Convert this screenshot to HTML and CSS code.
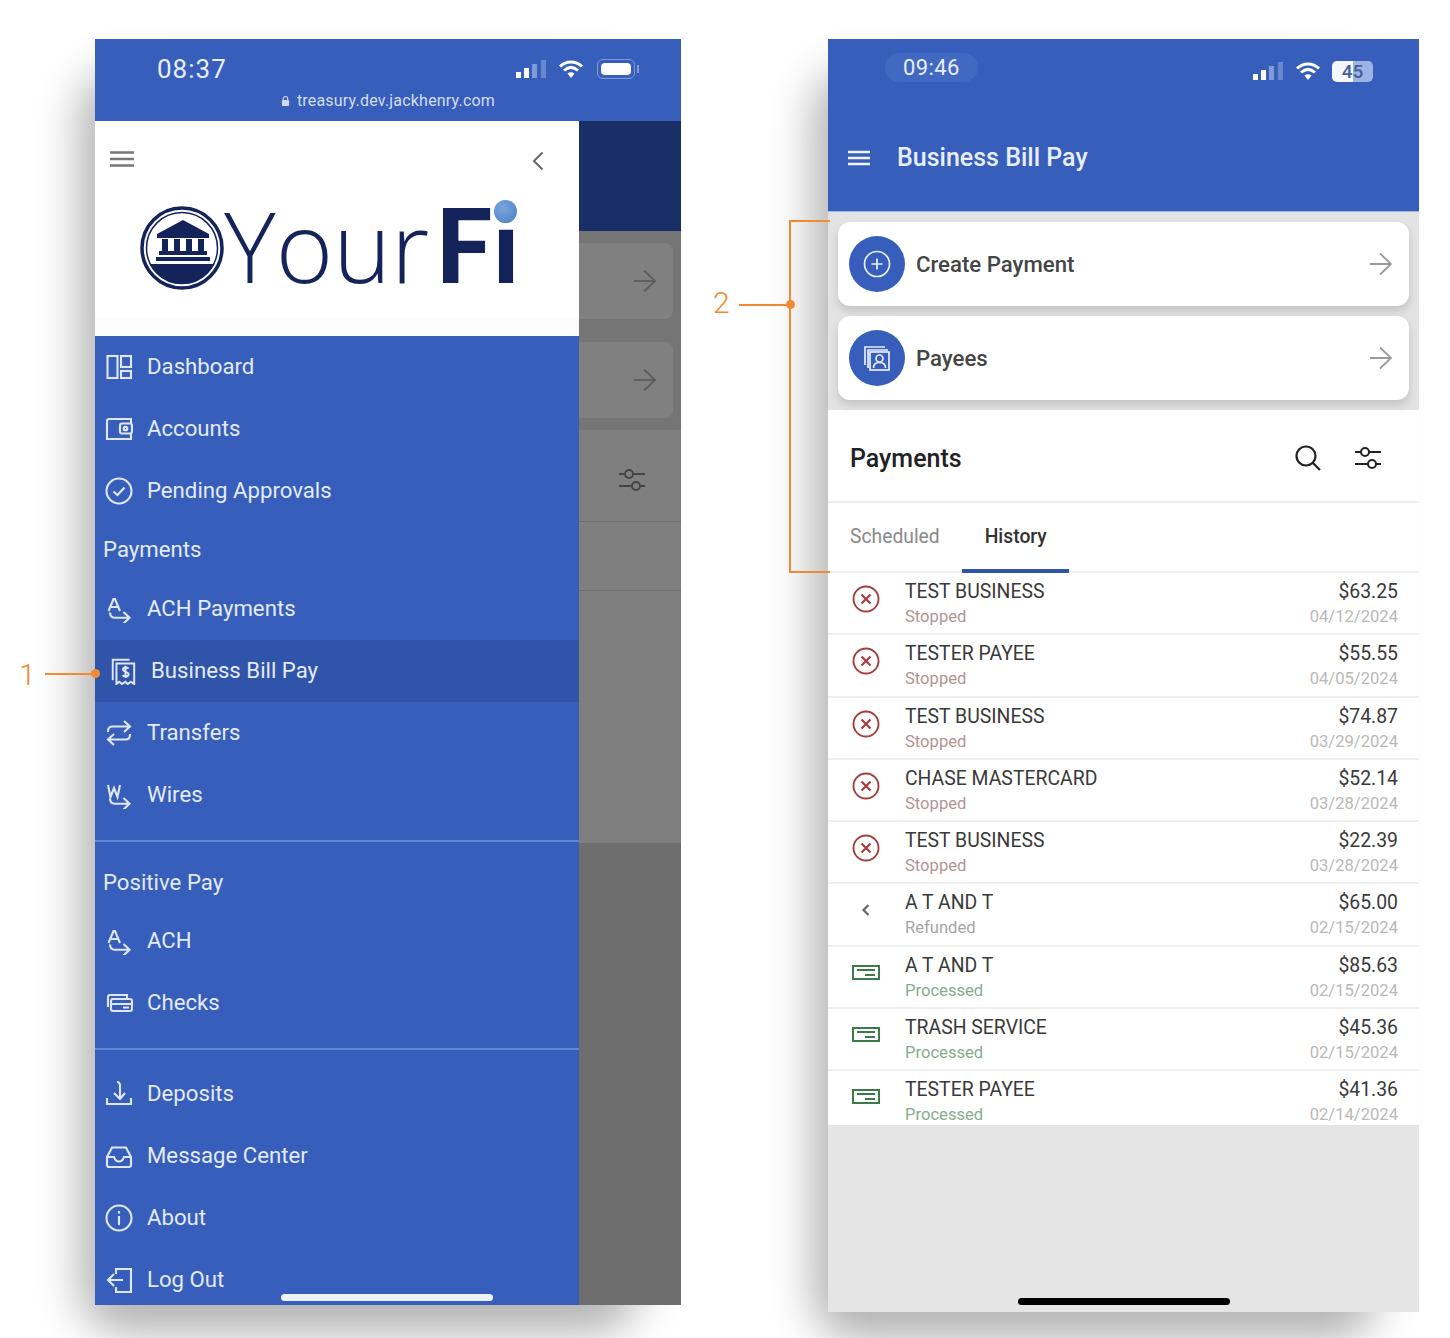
FILE: index.html
```html
<!DOCTYPE html>
<html lang="en">
<head>
    <meta charset="UTF-8">
    <meta name="viewport" content="width=device-width, initial-scale=1.0">
    <title>Business Bill Pay navigation</title>
    <link rel="stylesheet" href="styles.css">
</head>
<body>
    <svg class="sprite" xmlns="http://www.w3.org/2000/svg">
        <symbol id="i-ach" viewBox="0 0 28 28"><path d="M3.500 16 8.500 4h1.500l5 12M5.500 12h7.500"/><path d="M5 17.500c0 3.500 2 5.200 5 5.200h14.500M18.500 17l6 5.700-6 5.800"/></symbol>
        <symbol id="i-wire" viewBox="0 0 28 28"><path d="M3 4l2.500 12L9 7l3.500 9L15 4"/><path d="M5 17.500c0 3.500 2 5.200 5 5.200h14.500M18.500 17l6 5.700-6 5.800"/></symbol>
        <symbol id="i-arrow" viewBox="0 0 24 24"><path d="M1 12h21M11 1.500 22 12 11 22.500"/></symbol>
        <symbol id="i-sliders" viewBox="0 0 28 24"><path d="M1 6h6M15 6h12M1 18h13M22 18h5"/><circle cx="11" cy="6" r="4"/><circle cx="18" cy="18" r="4"/></symbol>
        <symbol id="i-stop" viewBox="0 0 28 28"><circle cx="14" cy="14" r="12.500"/><path d="M9.500 9.500l9 9M18.500 9.500l-9 9" stroke-width="2.200"/></symbol>
        <symbol id="i-check" viewBox="0 0 28 16"><rect x="1" y="1" width="26" height="13"/><path d="M5 5h18M13 10h10"/></symbol>
    </svg>

    <div class="page">
        <!-- left phone, menu open -->
        <div class="phone phone-menu">
            <div class="status status-menu">
                <div class="status-row">
                    <span class="clock">08:37</span>
                    <span class="status-icons">
                        <svg class="signal" viewBox="0 0 31 20"><rect x="0" y="13" width="5" height="6" fill="#fff"/><rect x="8" y="9" width="5" height="10" fill="#fff"/><rect x="16" y="5" width="5" height="14" fill="#7f9bd8"/><rect x="25" y="1" width="5" height="18" fill="#6787cf"/></svg>
                        <svg class="wifi" viewBox="0 0 26 20"><path d="M2 7.500c6.500-6 15.500-6 22 0M6 11.500c4.500-4 9.500-4 14 0" fill="none" stroke="#fff" stroke-width="3"/><path d="M9.500 14.500c2.300-1.800 4.700-1.800 7 0L13 19z" fill="#fff"/></svg>
                        <span class="battery"><i class="battery-fill"></i></span>
                    </span>
                </div>
                <div class="url">
                    <svg class="lock" viewBox="0 0 10 12"><path d="M2.500 5V3.500a2.500 2.500 0 0 1 5 0V5" fill="none" stroke="#cfd9f2" stroke-width="1.200"/><rect x="1" y="5" width="8" height="6.500" rx="1" fill="#cfd9f2"/></svg>
                    treasury.dev.jackhenry.com
                </div>
            </div>
            <div class="menu-body">
                <div class="drawer">
                    <div class="brand">
                        <div class="brand-top">
                            <svg class="burger" viewBox="0 0 24 16"><path d="M0 1.500h24M0 8h24M0 14.500h24"/></svg>
                            <svg class="back" viewBox="0 0 12 20"><path d="M10.500 1.500 2 10l8.500 8.500"/></svg>
                        </div>
                        <div class="logo">
                            <svg class="logo-mark" viewBox="0 0 84 84">
                                <circle cx="42" cy="42" r="40" fill="none" stroke="#14245a" stroke-width="3.500"/>
                                <circle cx="42" cy="42" r="35.500" fill="none" stroke="#14245a" stroke-width="1.500"/>
                                <path d="M9.800 58H74.200A36 36 0 0 1 9.800 58z" fill="#14245a"/>
                                <path d="M43 14 17 28v4h52v-4zM22 33h6v12h-6zM34 33h6v12h-6zM46 33h6v12h-6zM58 33h6v12h-6zM19 45h48v4H19zM16 51h54v4H16z" fill="#14245a"/>
                            </svg>
                            <span class="logo-word">Your<b>Fi</b><i class="logo-dot"></i></span>
                        </div>
                    </div>
                    <nav class="menu">
                        <a class="menu-item">
                            <svg class="menu-icon" viewBox="0 0 28 28"><rect x="2.500" y="3" width="10" height="22"/><rect x="16" y="3" width="10" height="11"/><rect x="16" y="18" width="10" height="7"/></svg>
                            Dashboard
                        </a>
                        <a class="menu-item">
                            <svg class="menu-icon" viewBox="0 0 28 28"><path d="M26 8V4H4a2 2 0 0 0-2 2v18h24v-5"/><rect x="15" y="8.500" width="12" height="10" rx="2"/><circle cx="20.500" cy="13.500" r="1.800"/></svg>
                            Accounts
                        </a>
                        <a class="menu-item">
                            <svg class="menu-icon" viewBox="0 0 28 28"><circle cx="14" cy="14" r="12.500"/><path d="M8.500 14.500l4 3.500 7-7.500"/></svg>
                            Pending Approvals
                        </a>
                        <div class="menu-label">Payments</div>
                        <a class="menu-item">
                            <svg class="menu-icon"><use href="#i-ach"/></svg>
                            ACH Payments
                        </a>
                        <a class="menu-item menu-item-active">
                            <svg class="menu-icon" viewBox="0 0 28 30"><path d="M3 23V3h18M3 5v20"/><path d="M7 7h19v22l-3.500-2.500L19 29l-2.500-2.500L13 29l-3-2.500L7 29z"/><path d="M20 12.500c-1-1.500-6-2-6 1s6 2 6 5-5 3-6.500 1M16.700 9.500v13"/></svg>
                            Business Bill Pay
                        </a>
                        <a class="menu-item">
                            <svg class="menu-icon" viewBox="0 0 28 28"><path d="M3 13v-1c0-3 2-4.500 4.500-4.500H25M19 2l6 5.500-6 5.500M25 15v1c0 3-2 4.500-4.500 4.500H3M9 15l-6 5.500L9 26"/></svg>
                            Transfers
                        </a>
                        <a class="menu-item">
                            <svg class="menu-icon"><use href="#i-wire"/></svg>
                            Wires
                        </a>
                        <div class="menu-divider"></div>
                        <div class="menu-label menu-label-pos">Positive Pay</div>
                        <a class="menu-item">
                            <svg class="menu-icon"><use href="#i-ach"/></svg>
                            ACH
                        </a>
                        <a class="menu-item">
                            <svg class="menu-icon" viewBox="0 0 28 28"><path d="M3 18V8a2 2 0 0 1 2-2h17v3"/><rect x="6" y="10" width="21" height="12" rx="2"/><path d="M6 15h21M18 18.500h6"/></svg>
                            Checks
                        </a>
                        <div class="menu-divider menu-divider-low"></div>
                        <a class="menu-item">
                            <svg class="menu-icon" viewBox="0 0 28 28"><path d="M2 18v6h24v-6"/><path d="M12 2c3 0 3 2 3 4v12M9 13l6 6 5-6"/></svg>
                            Deposits
                        </a>
                        <a class="menu-item">
                            <svg class="menu-icon" viewBox="0 0 28 28"><path d="M2 15l5-9.500h14l5 9.500v8a2 2 0 0 1-2 2H4a2 2 0 0 1-2-2z"/><path d="M2 15h7c1 3 3 4.500 5 4.500s4-1.500 5-4.500h7"/></svg>
                            Message Center
                        </a>
                        <a class="menu-item">
                            <svg class="menu-icon" viewBox="0 0 28 28"><circle cx="14" cy="14" r="12.500"/><path d="M14 12v9M14 7v2.500"/></svg>
                            About
                        </a>
                        <a class="menu-item">
                            <svg class="menu-icon" viewBox="0 0 28 28"><path d="M11 8V3h15v23H11v-5"/><path d="M18 14H3M9 8l-6 6 6 6"/></svg>
                            Log Out
                        </a>
                    </nav>
                </div>
                <div class="backdrop">
                    <div class="dim-header"></div>
                    <div class="dim-actions">
                        <div class="dim-card"><svg class="dim-arrow"><use href="#i-arrow"/></svg></div>
                        <div class="dim-card"><svg class="dim-arrow"><use href="#i-arrow"/></svg></div>
                    </div>
                    <div class="dim-row dim-row-tall"><svg class="dim-sliders"><use href="#i-sliders"/></svg></div>
                    <div class="dim-row"></div>
                    <div class="dim-fill"></div>
                    <div class="dim-end"></div>
                </div>
            </div>
            <div class="home-bar home-bar-white"></div>
        </div>

        <!-- right phone, bill pay screen -->
        <div class="phone phone-bills">
            <div class="status status-bills">
                <div class="status-row">
                    <span class="clock-pill">09:46</span>
                    <span class="status-icons status-icons-low">
                        <svg class="signal" viewBox="0 0 31 20"><rect x="0" y="13" width="5" height="6" fill="#fff"/><rect x="8" y="9" width="5" height="10" fill="#fff"/><rect x="16" y="5" width="5" height="14" fill="#7f9bd8"/><rect x="25" y="1" width="5" height="18" fill="#6787cf"/></svg>
                        <svg class="wifi" viewBox="0 0 26 20"><path d="M2 7.500c6.500-6 15.500-6 22 0M6 11.500c4.500-4 9.500-4 14 0" fill="none" stroke="#fff" stroke-width="3"/><path d="M9.500 14.500c2.300-1.800 4.700-1.800 7 0L13 19z" fill="#fff"/></svg>
                        <span class="battery-num">45</span>
                    </span>
                </div>
                <div class="title-row">
                    <svg class="burger burger-light" viewBox="0 0 24 16"><path d="M0 1.500h24M0 8h24M0 14.500h24"/></svg>
                    <span class="title">Business Bill Pay</span>
                </div>
            </div>

            <div class="actions">
                <div class="action-card">
                    <span class="action-circle">
                        <svg class="action-icon" viewBox="0 0 28 28"><circle cx="14" cy="14" r="12.500"/><path d="M14 8.500v11M8.500 14h11"/></svg>
                    </span>
                    <span class="action-text">Create Payment</span>
                    <svg class="action-arrow"><use href="#i-arrow"/></svg>
                </div>
                <div class="action-card">
                    <span class="action-circle">
                        <svg class="action-icon" viewBox="0 0 28 28"><path d="M2 21V3h20M5 24V6h20"/><rect x="7" y="8" width="19" height="18"/><circle cx="16.500" cy="14.500" r="3.500"/><path d="M10.500 24c0-4 3-5.500 6-5.500s6 1.500 6 5.500"/></svg>
                    </span>
                    <span class="action-text">Payees</span>
                    <svg class="action-arrow"><use href="#i-arrow"/></svg>
                </div>
            </div>

            <div class="list-head">
                <span class="list-title">Payments</span>
                <svg class="tool-search" viewBox="0 0 26 26"><circle cx="11" cy="11" r="9.500"/><path d="M18 18l7 7"/></svg>
                <svg class="tool-sliders"><use href="#i-sliders"/></svg>
            </div>

            <div class="tabs">
                <span class="tab">Scheduled</span>
                <span class="tab tab-active">History</span>
            </div>

            <div class="rows">
                <div class="row">
                    <svg class="row-icon row-icon-stop"><use href="#i-stop"/></svg>
                    <div class="row-main"><div class="row-name">TEST BUSINESS</div><div class="row-state state-stop">Stopped</div></div>
                    <div class="row-side"><div class="row-amount">$63.25</div><div class="row-date">04/12/2024</div></div>
                </div>
                <div class="row">
                    <svg class="row-icon row-icon-stop"><use href="#i-stop"/></svg>
                    <div class="row-main"><div class="row-name">TESTER PAYEE</div><div class="row-state state-stop">Stopped</div></div>
                    <div class="row-side"><div class="row-amount">$55.55</div><div class="row-date">04/05/2024</div></div>
                </div>
                <div class="row">
                    <svg class="row-icon row-icon-stop"><use href="#i-stop"/></svg>
                    <div class="row-main"><div class="row-name">TEST BUSINESS</div><div class="row-state state-stop">Stopped</div></div>
                    <div class="row-side"><div class="row-amount">$74.87</div><div class="row-date">03/29/2024</div></div>
                </div>
                <div class="row">
                    <svg class="row-icon row-icon-stop"><use href="#i-stop"/></svg>
                    <div class="row-main"><div class="row-name">CHASE MASTERCARD</div><div class="row-state state-stop">Stopped</div></div>
                    <div class="row-side"><div class="row-amount">$52.14</div><div class="row-date">03/28/2024</div></div>
                </div>
                <div class="row">
                    <svg class="row-icon row-icon-stop"><use href="#i-stop"/></svg>
                    <div class="row-main"><div class="row-name">TEST BUSINESS</div><div class="row-state state-stop">Stopped</div></div>
                    <div class="row-side"><div class="row-amount">$22.39</div><div class="row-date">03/28/2024</div></div>
                </div>
                <div class="row">
                    <svg class="row-icon row-icon-refund" viewBox="0 0 28 28"><path d="M16.500 9 11.500 14l5 5"/></svg>
                    <div class="row-main"><div class="row-name">A T AND T</div><div class="row-state state-refund">Refunded</div></div>
                    <div class="row-side"><div class="row-amount">$65.00</div><div class="row-date">02/15/2024</div></div>
                </div>
                <div class="row">
                    <svg class="row-icon row-icon-check"><use href="#i-check"/></svg>
                    <div class="row-main"><div class="row-name">A T AND T</div><div class="row-state state-done">Processed</div></div>
                    <div class="row-side"><div class="row-amount">$85.63</div><div class="row-date">02/15/2024</div></div>
                </div>
                <div class="row">
                    <svg class="row-icon row-icon-check"><use href="#i-check"/></svg>
                    <div class="row-main"><div class="row-name">TRASH SERVICE</div><div class="row-state state-done">Processed</div></div>
                    <div class="row-side"><div class="row-amount">$45.36</div><div class="row-date">02/15/2024</div></div>
                </div>
                <div class="row">
                    <svg class="row-icon row-icon-check"><use href="#i-check"/></svg>
                    <div class="row-main"><div class="row-name">TESTER PAYEE</div><div class="row-state state-done">Processed</div></div>
                    <div class="row-side"><div class="row-amount">$41.36</div><div class="row-date">02/14/2024</div></div>
                </div>
            </div>
            <div class="empty"></div>
            <div class="home-bar home-bar-black"></div>
        </div>

        <!-- orange callouts -->
        <span class="callout-num callout-num-1">1</span>
        <span class="callout-line callout-line-1"></span>
        <span class="callout-dot callout-dot-1"></span>
        <span class="callout-num callout-num-2">2</span>
        <span class="callout-line callout-line-2"></span>
        <span class="callout-bracket"></span>
        <span class="callout-dot callout-dot-2"></span>
    </div>
</body>
</html>
```

FILE: styles.css
```css
* {
    box-sizing: border-box;
}

body {
    margin: 0;
    background-color: #fff;
    font-family: Roboto, 'Noto Sans', sans-serif;
}

.sprite {
    display: none;
}

.page {
    position: relative;
    display: flex;
    align-items: flex-start;
    gap: 147px;
    width: 1450px;
    height: 1338px;
    padding: 39px 0 0 95px;
    overflow: hidden;
}

.phone {
    position: relative;
    display: flex;
    flex-direction: column;
    overflow: hidden;
    flex: none;
}

.page::before,
.page::after {
    content: '';
    position: absolute;
    background: transparent;
    border-radius: 30px;
    box-shadow: -6px 14px 44px 14px rgba(0, 0, 0, 0.3);
}

.page::before {
    left: 100px;
    top: 70px;
    width: 530px;
    height: 1235px;
}

.page::after {
    left: 833px;
    top: 70px;
    width: 535px;
    height: 1242px;
}

.phone-menu {
    width: 586px;
    height: 1266px;
    background-color: #365eba;
    z-index: 1;
}

.phone-bills {
    width: 591px;
    height: 1273px;
    background-color: #fff;
    z-index: 1;
}

/* status bars */
.status {
    background-color: #365eba;
    color: #e8eefa;
    flex: none;
}

.status-menu {
    height: 82px;
    padding: 14px 42px 0 62px;
}

.status-bills {
    height: 173px;
    padding: 12px 43px 0 57px;
    border-bottom: 1px solid #9db7e8;
}

.status-row {
    display: flex;
    justify-content: space-between;
    align-items: center;
    height: 32px;
}

.clock {
    font-size: 26px;
    letter-spacing: 1px;
}

.clock-pill {
    padding: 2px 18px;
    border-radius: 16px;
    background-color: #4169c2;
    font-size: 22px;
    letter-spacing: 0.4px;
}

.status-icons {
    display: flex;
    align-items: center;
    gap: 11px;
}

.status-icons-low {
    margin-top: 8px;
}

.signal {
    width: 31px;
    height: 20px;
}

.wifi {
    width: 26px;
    height: 20px;
}

.battery {
    position: relative;
    display: block;
    width: 38px;
    height: 20px;
    padding: 3px;
    margin: 0 4px 0 2px;
    border: 1px solid #7f9bd8;
    border-radius: 6px;
}

.battery::after {
    content: '';
    position: absolute;
    right: -5px;
    top: 5px;
    width: 2px;
    height: 8px;
    background-color: #7f9bd8;
}

.battery-fill {
    display: block;
    width: 100%;
    height: 100%;
    border-radius: 4px;
    background-color: #fff;
}

.battery-num {
    width: 41px;
    height: 21px;
    margin-right: 3px;
    border-radius: 5px;
    background: linear-gradient(90deg, #f4f6fb 50%, #9db3e3 50%);
    color: #41609f;
    font-size: 19px;
    font-weight: 500;
    line-height: 21px;
    text-align: center;
}

.url {
    display: flex;
    justify-content: center;
    align-items: center;
    gap: 7px;
    margin-top: 6px;
    padding-right: 20px;
    font-size: 16px;
    letter-spacing: 0.2px;
    color: #d3ddf3;
}

.lock {
    width: 9px;
    height: 12px;
}

/* left phone */
.menu-body {
    display: flex;
    flex: 1;
    min-height: 0;
}

.drawer {
    width: 484px;
    flex: none;
    background-color: #365eba;
}

.brand {
    height: 215px;
    padding: 30px 35px 0 15px;
    background: linear-gradient(#fff 91%, #fcfcfc 91%);
}

.brand-top {
    display: flex;
    justify-content: space-between;
    align-items: flex-start;
}

.burger {
    width: 24px;
    height: 16px;
    fill: none;
    stroke: #777;
    stroke-width: 2.600;
}

.burger-light {
    width: 22px;
    stroke: #f1f4fb;
    stroke-width: 2.600;
}

.back {
    width: 12px;
    height: 20px;
    fill: none;
    stroke: #666;
    stroke-width: 2;
}

.logo {
    display: flex;
    align-items: flex-start;
    margin: 35px 0 0 30px;
}

.logo-mark {
    width: 84px;
    height: 84px;
    flex: none;
}

.logo-word {
    position: relative;
    display: block;
    margin-top: -4px;
    font-family: 'Open Sans', Lato, sans-serif;
    font-size: 98px;
    font-weight: 300;
    line-height: 84px;
    color: #14245a;
}

.logo-word b {
    margin-left: 6px;
    font-family: Lato, 'Open Sans', sans-serif;
    font-size: 102px;
    font-weight: 900;
}

.logo-dot {
    position: absolute;
    right: 2px;
    top: -2px;
    width: 23px;
    height: 23px;
    border-radius: 50%;
    background: radial-gradient(circle at 40% 35%, #7aa6dc, #4a80c4);
    box-shadow: 0 5px 0 1px #fff;
}

.menu {
    display: flex;
    flex-direction: column;
}

.menu-item {
    display: flex;
    align-items: center;
    gap: 14px;
    height: 62px;
    flex: none;
    padding: 0 0 2px 10px;
    font-size: 22.200px;
    color: #e3eaf8;
}

.menu-item-active {
    padding-left: 14px;
    background-color: #2f54a9;
}

.menu-icon {
    width: 28px;
    height: 28px;
    flex: none;
    margin-top: 2px;
    fill: none;
    stroke: #dfe7f7;
    stroke-width: 2.100;
}

.menu-label {
    display: flex;
    align-items: center;
    height: 56px;
    padding: 0 0 2px 8px;
    font-size: 22.200px;
    color: #e3eaf8;
}

.menu-label-pos {
    height: 68px;
    padding: 12px 0 0 8px;
}

.menu-divider {
    height: 2px;
    margin-top: 14px;
    background-color: #5f86d8;
}

.menu-divider-low {
    margin-bottom: 13px;
}

.home-bar {
    position: absolute;
    height: 7px;
    width: 212px;
    border-radius: 4px;
}

.home-bar-white {
    left: 186px;
    bottom: 4px;
    background-color: #eef2fb;
}

.home-bar-black {
    left: 190px;
    bottom: 7px;
    background-color: #000;
}

/* dimmed screen behind the drawer */
.backdrop {
    flex: 1;
    display: flex;
    flex-direction: column;
    background-color: #7f7f7f;
}

.dim-header {
    height: 110px;
    flex: none;
    background-color: #1a2f66;
}

.dim-actions {
    display: flex;
    flex-direction: column;
    gap: 23px;
    height: 199px;
    flex: none;
    padding: 12px 8px 0 0;
    background-color: #757575;
}

.dim-card {
    display: flex;
    justify-content: flex-end;
    align-items: center;
    height: 76px;
    padding-right: 16px;
    border-radius: 0 8px 8px 0;
    background-color: #808080;
}

.dim-arrow {
    width: 24px;
    height: 24px;
    fill: none;
    stroke: #5f5f5f;
    stroke-width: 2;
}

.dim-row {
    height: 69px;
    flex: none;
    border-bottom: 1px solid #6f6f6f;
}

.dim-row-tall {
    display: flex;
    justify-content: flex-end;
    align-items: center;
    height: 92px;
    padding: 8px 35px 0 0;
}

.dim-sliders {
    width: 28px;
    height: 24px;
    fill: none;
    stroke: #444;
    stroke-width: 1.900;
}

.dim-fill {
    height: 252px;
    flex: none;
}

.dim-end {
    flex: 1;
    background-color: #6e6e6e;
}

/* right phone */
.title-row {
    display: flex;
    align-items: center;
    gap: 27px;
    margin-top: 60px;
    padding-left: 20px;
    margin-left: -57px;
}

.title {
    font-size: 25px;
    font-weight: 500;
    color: #e8eefa;
}

.actions {
    display: flex;
    flex-direction: column;
    gap: 10px;
    height: 198px;
    flex: none;
    padding: 10px;
    background-color: #e3e3e3;
}

.action-card {
    display: flex;
    align-items: center;
    height: 84px;
    padding: 0 16px 0 11px;
    border-radius: 12px;
    background-color: #fff;
    box-shadow: 0 5px 9px rgba(0, 0, 0, 0.14);
}

.action-circle {
    display: flex;
    justify-content: center;
    align-items: center;
    width: 56px;
    height: 56px;
    flex: none;
    border-radius: 50%;
    background-color: #365eba;
}

.action-icon {
    width: 28px;
    height: 28px;
    fill: none;
    stroke: #e8eefa;
    stroke-width: 1.700;
}

.action-text {
    flex: 1;
    margin-left: 11px;
    font-size: 22.200px;
    font-weight: 500;
    color: #454545;
}

.action-arrow {
    width: 24px;
    height: 24px;
    fill: none;
    stroke: #9a9a9a;
    stroke-width: 1.800;
}

.list-head {
    display: flex;
    align-items: center;
    height: 93px;
    flex: none;
    padding: 5px 37px 0 22px;
    border-bottom: 2px solid #eee;
}

.list-title {
    flex: 1;
    font-size: 25px;
    font-weight: 500;
    color: #222;
}

.tool-search {
    width: 26px;
    height: 26px;
    margin-right: 33px;
    fill: none;
    stroke: #222;
    stroke-width: 2.200;
}

.tool-sliders {
    width: 28px;
    height: 24px;
    fill: none;
    stroke: #222;
    stroke-width: 2;
}

.tabs {
    display: flex;
    height: 70px;
    flex: none;
    padding-left: 22px;
    border-bottom: 2px solid #eee;
}

.tab {
    padding-top: 22px;
    font-size: 19.300px;
    color: #8a8a8a;
}

.tab-active {
    height: 70px;
    margin-left: 22px;
    padding: 22px 22px 0 23px;
    border-bottom: 4px solid #2f55a8;
    font-weight: 500;
    color: #333;
}

.rows {
    height: 552px;
    flex: none;
    overflow: hidden;
}

.row {
    display: flex;
    align-items: center;
    height: 62.250px;
    padding: 0 21px 0 24px;
    border-bottom: 2px solid #efefef;
}

.row-icon {
    width: 28px;
    height: 28px;
    flex: none;
    margin-top: -8px;
    fill: none;
    stroke-width: 1.900;
}

.row-icon-stop {
    stroke: #a43f40;
}

.row-icon-refund {
    stroke: #666;
    stroke-width: 2.200;
}

.row-icon-check {
    height: 16px;
    stroke: #3d7a4a;
    stroke-width: 2;
}

.row-main {
    flex: 1;
    margin-left: 25px;
}

.row-name {
    font-size: 19.400px;
    line-height: 28px;
    color: #3a3a3a;
}

.row-state {
    font-size: 16.600px;
    line-height: 22px;
}

.state-stop {
    color: #b59393;
}

.state-refund {
    color: #a5a5a5;
}

.state-done {
    color: #84ad8c;
}

.row-side {
    text-align: right;
}

.row-amount {
    font-size: 19.400px;
    line-height: 28px;
    color: #3a3a3a;
}

.row-date {
    font-size: 16.600px;
    line-height: 22px;
    color: #b9b9b9;
}

.empty {
    flex: 1;
    background-color: #e5e5e5;
}

/* orange callouts */
.callout-num {
    position: absolute;
    z-index: 2;
    font-size: 30px;
    font-weight: 300;
    line-height: 36px;
    color: #f08a35;
}

.callout-num-1 {
    left: 19px;
    top: 657px;
}

.callout-num-2 {
    left: 713px;
    top: 285px;
}

.callout-line {
    position: absolute;
    z-index: 2;
    height: 2px;
    background-color: #f08a35;
}

.callout-line-1 {
    left: 45px;
    top: 673px;
    width: 50px;
}

.callout-line-2 {
    left: 739px;
    top: 304px;
    width: 51px;
}

.callout-dot {
    position: absolute;
    z-index: 3;
    width: 9px;
    height: 9px;
    border-radius: 50%;
    background-color: #f08a35;
}

.callout-dot-1 {
    left: 91px;
    top: 669px;
}

.callout-dot-2 {
    left: 786px;
    top: 300px;
}

.callout-bracket {
    position: absolute;
    z-index: 2;
    left: 789px;
    top: 220px;
    width: 41px;
    height: 353px;
    border: 2px solid #f08a35;
    border-right: none;
}
```
